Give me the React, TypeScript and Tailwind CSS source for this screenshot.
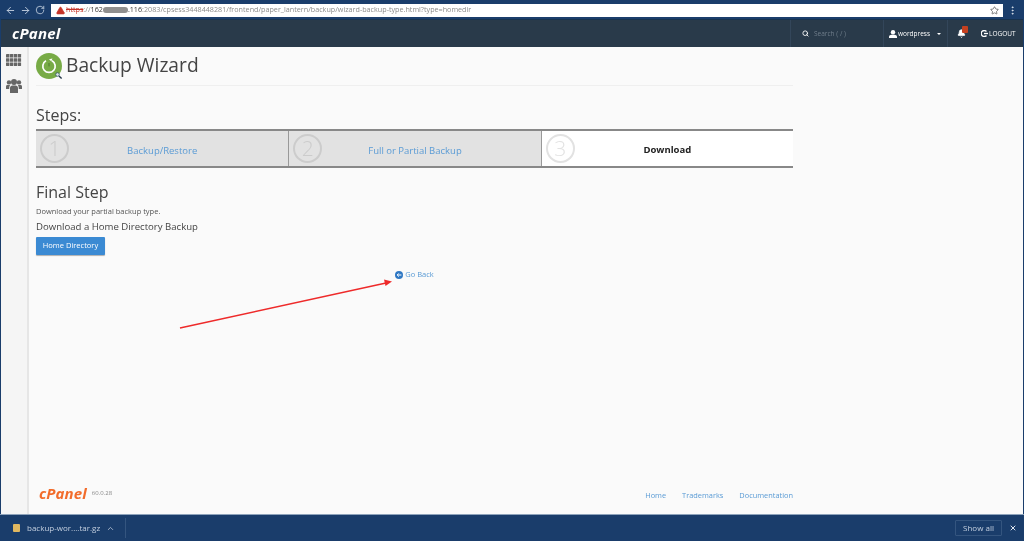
import React from "react";
import { ArrowLeft, ArrowRight, RotateCw, Star, EllipsisVertical, Search, Bell, ChevronUp, X, TriangleAlert } from "lucide-react";

const steps = [
  { n: 1, label: "Backup/Restore" },
  { n: 2, label: "Full or Partial Backup" },
  { n: 3, label: "Download", active: true },
];

// block grid from the cPanel sidebar
function GridIcon() {
  const cells = [];
  for (let r = 0; r < 3; r++) {
    for (let c = 0; c < 4; c++) {
      cells.push(<rect key={`${r}-${c}`} x={c * 3.9} y={r * 4.2} width="3.4" height="3.6" rx="0.4" />);
    }
  }
  return (
    <svg width="15.5" height="12" viewBox="0 0 15.5 12" fill="#666">
      {cells}
    </svg>
  );
}

function GroupIcon() {
  return (
    <svg width="16" height="14" viewBox="0 0 16 14" fill="#666">
      <circle cx="3" cy="3.4" r="2.2" />
      <circle cx="13" cy="3.4" r="2.2" />
      <circle cx="8" cy="3" r="3" />
      <path d="M0 10V7.5C0 6.4.8 6 1.8 6h2.4C3.4 7 3.2 8 3.2 10H0z" />
      <path d="M16 10V7.5c0-1.1-.8-1.5-1.8-1.5h-2.4c.8 1 1 2 1 4H16z" />
      <path d="M4 14V9.2C4 7.5 5 6.6 6.4 6.6h3.2c1.4 0 2.4.9 2.4 2.6V14H4z" />
    </svg>
  );
}

function BackupLogo() {
  return (
    <svg width="27" height="27" viewBox="0 0 27 27">
      <circle cx="13" cy="13" r="13" fill="#78ab46" />
      <path d="M10 7.8a6.2 6.2 0 1 0 6 0" fill="none" stroke="#fff" strokeWidth="1.7" />
      <path d="M13 6.2l3.4-.6-1 3z" fill="#fff" />
      <path d="M13 10v3.4" stroke="#4d7a2c" strokeWidth="1" />
      <circle cx="21.5" cy="21.5" r="1.8" fill="#dfe8e8" stroke="#33566a" strokeWidth="0.8" />
      <path d="M23 23l2.6 2.6" stroke="#25384a" strokeWidth="1.4" />
    </svg>
  );
}

export default function App() {
  return (
    <div className="relative w-[1024px] h-[541px] overflow-hidden flex flex-col bg-[#1a3d6b] blur-[0.35px] font-['Open_Sans',sans-serif]">
      {/* browser toolbar */}
      <div className="h-[19px] shrink-0 flex items-center pl-[5px] pr-[5px] pt-[1px]">
        <ArrowLeft size={11} className="text-[#c3cfdf] mr-[2px]" />
        <ArrowRight size={11} className="text-[#c3cfdf] ml-[2px] mr-[2px]" />
        <RotateCw size={10} className="text-[#c3cfdf] ml-[2px] mr-[6px]" />
        <div className="h-[13px] w-[952px] bg-white flex items-center pl-[5px] pr-[2px] text-[7.2px] leading-none text-[#8b8b8b] whitespace-nowrap">
          <TriangleAlert size={9} className="text-[#c5352a] fill-[#c5352a] stroke-[#c5352a] mr-[1px]" />
          <span className="text-[#c5352a] line-through">https</span>
          <span>://</span>
          <span className="text-[#333]">162</span>
          <span className="w-[25px] h-[6px] bg-[#8f8f8f] rounded-[3px]" />
          <span className="text-[#333]">.116</span>
          <span>:2083/cpsess3448448281/frontend/paper_lantern/backup/wizard-backup-type.html?type=homedir</span>
          <Star size={9} className="ml-auto mr-[2px] text-[#555]" />
        </div>
        <EllipsisVertical size={11} className="text-[#dfe6ef] ml-[4px]" />
      </div>

      {/* page */}
      <div className="flex-1 min-h-0 ml-[1px] mr-[1px] flex flex-col">
        <div className="h-[28px] shrink-0 bg-[#293a4a] border-t border-[#16324f] flex items-center text-[#b9c1c9] text-[6.5px]">
          <span className="ml-[11px] text-white font-bold italic text-[15px] tracking-[0.2px]">cPanel</span>
          <div className="ml-auto h-full w-[93px] border-l border-[#33465a] flex items-center pl-[11px]">
            <Search size={7} className="text-white mr-[5px]" strokeWidth={3} />
            <span className="text-[#6f7d8a]">Search ( / )</span>
          </div>
          <div className="h-full w-[64px] border-l border-[#33465a] flex items-center pl-[5px] text-white whitespace-nowrap">
            <svg width="8" height="8" viewBox="0 0 8 8" fill="#fff" className="mr-[1px]">
              <circle cx="4" cy="2.2" r="2.2" />
              <path d="M0 8V6.6C0 5.4 1.4 4.8 4 4.8s4 .6 4 1.8V8z" />
            </svg>
            <span>wordpress</span>
            <span className="ml-[7px] border-x-[2.5px] border-t-[2.5px] border-x-transparent border-t-white" />
          </div>
          <div className="relative h-full w-[27px] border-l border-[#33465a] flex items-center justify-center">
            <Bell size={9} className="fill-white text-white" />
            <span className="absolute top-[6px] left-[14px] w-[6px] h-[7px] bg-[#c5401f] rounded-[1px]" />
          </div>
          <div className="h-full w-[49px] pl-[7px] flex items-center text-white">
            <svg width="7" height="7" viewBox="0 0 7 7" fill="none" stroke="#fff" strokeWidth="1.3" className="mr-[1px]">
              <path d="M5.5 1.5a3 3 0 1 0 0 4" />
              <path d="M3 3.5h4" />
            </svg>
            <span>LOGOUT</span>
          </div>
        </div>

        <div className="flex-1 min-h-0 flex bg-[#fafafa]">
          <div className="w-[28px] shrink-0 bg-[#f5f5f5] border-r-2 border-[#e6e6e6] flex flex-col items-center pt-[7px] text-[#666]">
            <GridIcon />
            <div className="mt-[13px]">
              <GroupIcon />
            </div>
          </div>
          <div className="w-[757px] ml-[7px] flex flex-col">
            <div className="h-[38px] mt-[1px] border-b border-[#efefef] flex items-start pt-[5px]">
              <BackupLogo />
              <h1 className="ml-[3px] -mt-[1px] text-[19.2px] leading-[26px] text-[#444]">Backup Wizard</h1>
            </div>

            <h2 className="mt-[18px] text-[16px] leading-[22px] text-[#444]">Steps:</h2>
            <div className="mt-[3px] h-[39px] flex border-y-2 border-[#888]">
              {steps.map((s, i) => (
                <div
                  key={s.n}
                  className={`relative w-[253px] flex items-center justify-center ${
                    s.active ? "bg-white" : "bg-[#e2e2e2]"
                  } ${i > 0 ? "border-l border-[#999]" : ""}`}
                >
                  <span className={`absolute left-[4px] top-[3px] w-[29px] h-[29px] rounded-full border-2 flex items-center justify-center text-[21px] font-light leading-none ${
                    s.active ? "border-[#e2e2e2] text-[#e2e2e2]" : "border-[#ccc] text-[#ccc]"
                  }`}>
                    {s.n}
                  </span>
                  {s.active ? (
                    <span className="text-[9.5px] font-bold text-[#222] mt-[3px]">{s.label}</span>
                  ) : (
                    <span className="text-[9.5px] text-[#5a9bd5] mt-[5px]">{s.label}</span>
                  )}
                </div>
              ))}
            </div>

            <h3 className="mt-[13px] text-[16px] leading-[22px] text-[#444]">Final Step</h3>
            <p className="mt-[3px] text-[7.5px] leading-[10px] text-[#555]">Download your partial backup type.</p>
            <p className="mt-[4px] text-[9.6px] leading-[13px] text-[#444]">Download a Home Directory Backup</p>
            <div className="mt-[4px] flex">
              <button className="w-[69px] h-[18px] bg-[#3b8ad3] rounded-[1px] shadow-[0_1px_1px_rgba(0,0,0,0.3)] text-white text-[7.5px]">
                Home Directory
              </button>
            </div>

            <div className="mt-[14px] flex justify-center items-center text-[7.5px] text-[#5a9bd5]">
              <svg width="8" height="8" viewBox="0 0 8 8" className="mr-[2px]">
                <circle cx="4" cy="4" r="4" fill="#2f78c4" />
                <path d="M6.4 4H2.2M3.8 2.4L2.2 4l1.6 1.6" fill="none" stroke="#fff" strokeWidth="1" />
              </svg>
              <span>Go Back</span>
            </div>

            <div className="mt-auto mb-[13px] flex items-center">
              <span className="ml-[3px] text-[#f26b2a] font-bold italic text-[15px] leading-[14px] tracking-[0.1px]">cPanel</span>
              <span className="ml-[5px] text-[6px] text-[#888]">60.0.28</span>
              <div className="ml-auto pt-[4px] flex gap-[16px] text-[7.4px] text-[#5a9bd5]">
                <span>Home</span>
                <span>Trademarks</span>
                <span>Documentation</span>
              </div>
            </div>
          </div>
        </div>
      </div>

      {/* download bar */}
      <div className="h-[27px] shrink-0 border-t border-[#8ea3bb] flex items-center text-[#c3cfdf] text-[8px]">
        <span className="ml-[13px] w-[7px] h-[8px] bg-[#e0b860] rounded-[1px]" />
        <span className="ml-[7px]">backup-wor....tar.gz</span>
        <ChevronUp size={9} className="ml-[6px]" />
        <span className="ml-[10px] h-[20px] border-l border-[#34557f]" />
        <span className="ml-auto w-[47px] h-[16px] border border-[#34557f] rounded-[1px] flex items-center justify-center">Show all</span>
        <X size={8} className="ml-[7px] mr-[7px] text-[#dfe6ef]" strokeWidth={3} />
      </div>

      {/* red annotation arrow */}
      <svg className="absolute left-0 top-0 pointer-events-none" width="1024" height="541">
        <line x1="180" y1="328" x2="386" y2="283" stroke="#ee2a2a" strokeWidth="1.5" />
        <polygon points="392,281.5 384,279.5 385.5,286" fill="#ee2a2a" />
      </svg>
    </div>
  );
}
